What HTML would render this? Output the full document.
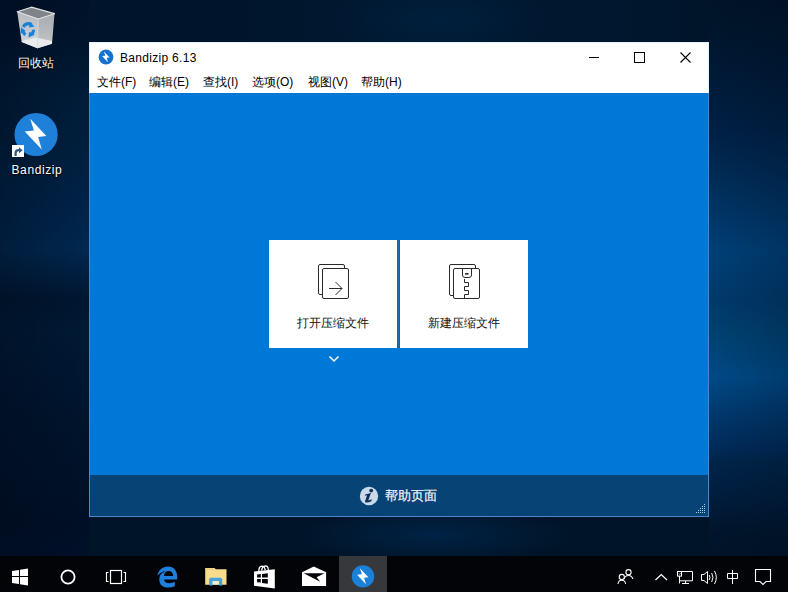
<!DOCTYPE html>
<html><head><meta charset="utf-8">
<style>
*{margin:0;padding:0;box-sizing:border-box}
html,body{width:788px;height:592px;overflow:hidden}
body{position:relative;font-family:"Liberation Sans",sans-serif;background:#001428}
.bg{position:absolute}
#bgL{left:0;top:0;width:89px;height:556px;
background:linear-gradient(90deg,rgba(0,8,22,0.35),rgba(0,8,22,0) 100%),
linear-gradient(180deg,#00122a 0%,#00132a 5%,#001c38 16%,#00203f 28%,#002248 36%,#002850 45%,#001630 54%,#001a35 59%,#001530 72%,#00142c 76%,#001128 88%,#000f25 94%,#00102a 100%)}
#bgT{left:89px;top:0;width:620px;height:42px;
background:radial-gradient(ellipse 110px 40px at 351px 20px,rgba(0,32,62,0.9),rgba(0,32,62,0) 100%),linear-gradient(90deg,#00142b 0%,#00152c 20%,#001830 50%,#00172f 83%,#00152a 100%)}
#bgB{left:89px;top:517px;width:620px;height:39px;
background:radial-gradient(ellipse 140px 30px at 345px 18px,rgba(0,36,72,0.9),rgba(0,36,72,0) 100%),#001428}
#bgR{left:709px;top:0;width:79px;height:556px;
background:linear-gradient(90deg,rgba(0,10,25,0) 0%,rgba(0,10,25,0.22) 100%),
linear-gradient(180deg,#00132a 0%,#00152a 4%,#001a38 14%,#002045 23%,#002850 29%,#003566 38%,#004078 45%,#003a6c 54%,#004272 60%,#004a88 68%,#003a70 74%,#002a58 81%,#00254a 83%,#001c3c 90%,#00152b 96%,#00132a 100%)}
.a{position:absolute;white-space:nowrap}
svg{position:absolute;overflow:visible}
#win{position:absolute;left:89px;top:42px;width:620px;height:475px;border:1px solid #4a86cc;background:#0078d7}
#title{position:absolute;left:-1px;top:-1px;width:620px;height:31px;background:#fff;border:1px solid #e2f1fb;border-bottom:0}
#menu{position:absolute;left:-1px;top:30px;width:620px;height:20px;background:#fff;border:1px solid #e2f1fb;border-top:0;border-bottom:0}
#footer{position:absolute;left:0;top:432px;width:618px;height:41px;background:#074475}
.tile{position:absolute;top:197px;width:128px;height:108px;background:#fff}
#taskbar{position:absolute;left:0;top:556px;width:788px;height:36px;background:#030408}
.mi{position:absolute;top:2px;font-size:12px;line-height:14px;color:#000}
.lbl{font-size:12px;line-height:14px;color:#fff;text-shadow:0 1px 2px #000,0 0 1px #000}
</style></head><body>
<div class="bg" id="bgL"></div><div class="bg" id="bgT"></div><div class="bg" id="bgB"></div><div class="bg" id="bgR"></div>

<!-- desktop icons -->
<svg style="left:0;top:0" width="80" height="180" viewBox="0 0 80 180">
  <defs>
    <linearGradient id="rb" x1="0" y1="0" x2="0" y2="1">
      <stop offset="0" stop-color="#b4b8bd"/><stop offset="0.55" stop-color="#c4c7cb"/><stop offset="1" stop-color="#d6d9dc"/>
    </linearGradient>
  </defs>
  <path d="M17.2 11.7 L31.4 7.2 L54.5 13.7 L52 43.7 L37.5 48.2 L21.7 42.1 Z" fill="url(#rb)"/>
  <path d="M38.3 19 L54.5 13.7 L52 43.7 L37.5 48.2 Z" fill="#000" opacity="0.08"/>
  <path d="M21.7 41 L36 37.5 L52 41 L52 43.7 L37.5 48.2 L21.7 42.1 Z" fill="#eceef0" opacity="0.9"/>
  <path d="M17.2 11.7 L31.4 7.2 L54.5 13.7 L38.3 19 Z" fill="#7f8489" stroke="#dfe2e5" stroke-width="1.2" stroke-linejoin="round"/>
  <path d="M38.3 19 L37.5 48.2" stroke="#d5d8dc" stroke-width="0.8"/>
  <g fill="none" stroke="#1a80d8" stroke-width="3.2">
    <path d="M23.2 27 A5.6 5.6 0 0 1 31.5 24.6"/>
    <path d="M33.6 29.8 A5.6 5.6 0 0 1 29.5 35"/>
    <path d="M25.6 34.6 A5.6 5.6 0 0 1 22.6 29.6"/>
  </g>
  <g fill="#1a80d8">
    <path d="M30 22 L34.5 26.6 L29 27.6 Z"/>
    <path d="M34.8 34.5 L28.5 37.5 L29 32 Z"/>
    <path d="M20.5 33.5 L21 27.2 L25.5 31 Z"/>
  </g>
  <circle cx="36.1" cy="134.5" r="21.6" fill="#1e80d8"/>
  <path d="M30.22 118.74 L46.35 136.09 L38.13 137.00 L41.78 149.48 L24.74 131.52 L33.87 130.61 Z" fill="#fff"/>
  <rect x="12" y="145" width="12" height="12" fill="#fff"/>
  <path d="M15.6 156 V153 Q15.6 150.2 18.6 150.2 H19.5" fill="none" stroke="#30557e" stroke-width="2.2"/>
  <path d="M19 147.2 L22.6 150.2 L19 153.2 Z" fill="#30557e"/>
</svg>
<div class="a lbl" style="left:18px;top:56px;">回收站</div>
<div class="a lbl" style="left:11.5px;top:163px;letter-spacing:0.6px">Bandizip</div>

<div id="win">
  <div id="title">
    <svg style="left:8px;top:6px" width="16" height="16" viewBox="0 0 16 16">
      <circle cx="8" cy="8" r="7.4" fill="#1473d0"/>
      <path d="M5.98 2.58 L11.53 8.55 L8.70 8.86 L9.96 13.16 L4.09 6.97 L7.23 6.66 Z" fill="#fff"/>
    </svg>
    <div class="a" style="left:30px;top:8px;font-size:12px;line-height:14px;color:#000;letter-spacing:0.3px">Bandizip 6.13</div>
    <svg style="left:499px;top:14px" width="12" height="2"><rect x="0" y="0" width="10" height="1" fill="#000"/></svg>
    <svg style="left:544px;top:9px" width="12" height="12"><rect x="0.5" y="0.5" width="10" height="10" fill="none" stroke="#000" stroke-width="1"/></svg>
    <svg style="left:590px;top:9px" width="12" height="12"><path d="M0.5 0.5 L10.5 10.5 M10.5 0.5 L0.5 10.5" stroke="#000" stroke-width="1.1"/></svg>
  </div>
  <div id="menu">
    <div class="mi" style="left:7px">文件(F)</div>
    <div class="mi" style="left:59px">编辑(E)</div>
    <div class="mi" style="left:113px">查找(I)</div>
    <div class="mi" style="left:162px">选项(O)</div>
    <div class="mi" style="left:218px">视图(V)</div>
    <div class="mi" style="left:271px">帮助(H)</div>
  </div>

  <div class="tile" style="left:179px">
    <svg style="left:0;top:0" width="128" height="108" viewBox="269 240 128 108">
      <rect x="318.5" y="264.5" width="26" height="30" rx="1.5" fill="#fff" stroke="#2a2a2a" stroke-width="1"/>
      <rect x="322.5" y="268.5" width="26" height="30" rx="1.5" fill="#fff" stroke="#2a2a2a" stroke-width="1"/>
      <path d="M329 288.5 H342 M335.5 282 L342 288.5 L335.5 295" fill="none" stroke="#2a2a2a" stroke-width="1"/>
    </svg>
    <div class="a" style="left:0;width:128px;top:76px;text-align:center;font-size:12px;line-height:14px;color:#111">打开压缩文件</div>
  </div>
  <div class="a" style="left:307px;top:197px;width:3px;height:108px;background:linear-gradient(90deg,#0e5a94,#1d70b2,#0e5a94)"></div>
  <div class="tile" style="left:310px">
    <svg style="left:0;top:0" width="128" height="108" viewBox="400 240 128 108">
      <rect x="449.5" y="264.5" width="26" height="31" rx="1.5" fill="#fff" stroke="#2a2a2a" stroke-width="1"/>
      <rect x="453.5" y="268.5" width="26" height="30" rx="1.5" fill="#fff" stroke="#2a2a2a" stroke-width="1"/>
      <path d="M462.5 268.5 V275 Q462.5 277.5 465 277.5 H469 Q471.5 277.5 471.5 275 V268.5" fill="none" stroke="#2a2a2a" stroke-width="1"/>
      <rect x="465" y="273" width="3.5" height="1.6" fill="#2a2a2a"/>
      <path d="M464.5 279 V282.5 H468.5 V286.5 H464.5 V290.5 H468.5 V294.5 H464.5 V298.5" fill="none" stroke="#2a2a2a" stroke-width="1"/>
    </svg>
    <div class="a" style="left:0;width:128px;top:76px;text-align:center;font-size:12px;line-height:14px;color:#111">新建压缩文件</div>
  </div>
  <svg style="left:237.5px;top:312px" width="12" height="8" viewBox="0 0 12 8">
    <path d="M1.5 1.5 L6 6 L10.5 1.5" fill="none" stroke="#fff" stroke-width="1.5"/>
  </svg>

  <div id="footer">
    <svg style="left:270px;top:11px" width="20" height="20" viewBox="0 0 20 20">
      <circle cx="9" cy="10" r="9.2" fill="#c9d9ea"/>
      <circle cx="11.2" cy="4.6" r="1.9" fill="#0f2f55"/>
      <path d="M5.2 8.6 L11 7 L8.4 14 Q8.3 14.6 9 14.3 L11.9 13.2 L11.3 15.2 Q8.6 16.8 6.4 16.6 Q4.6 16.4 5 15.2 L7.1 9.3 L5 9.7 Z" fill="#0f2f55"/>
</svg>
    <div class="a" style="left:295px;top:13px;font-size:13px;line-height:15px;color:#f0f4f8;-webkit-text-stroke:0.2px #f0f4f8">帮助页面</div>
    <svg style="left:606px;top:29px" width="10" height="10" viewBox="696 504 10 10">
      <g fill="#a6cdf0">
        <rect x="704" y="504" width="1" height="1"/>
        <rect x="702" y="506" width="1" height="1"/><rect x="704" y="506" width="1" height="1"/>
        <rect x="700" y="508" width="1" height="1"/><rect x="702" y="508" width="1" height="1"/><rect x="704" y="508" width="1" height="1"/>
        <rect x="698" y="510" width="1" height="1"/><rect x="700" y="510" width="1" height="1"/><rect x="702" y="510" width="1" height="1"/><rect x="704" y="510" width="1" height="1"/>
        <rect x="696" y="512" width="1" height="1"/><rect x="698" y="512" width="1" height="1"/><rect x="700" y="512" width="1" height="1"/><rect x="702" y="512" width="1" height="1"/><rect x="704" y="512" width="1" height="1"/>
      </g>
    </svg>
  </div>
</div>

<div id="taskbar">
  <svg style="left:0;top:0" width="788" height="36" viewBox="0 556 788 36">
    <!-- start -->
    <path d="M12 570.9 L19 569.9 V576 H12 Z M20 569.7 L28 568.5 V576 H20 Z M12 577 H19 V584.1 L12 583.1 Z M20 577 H28 V585.5 L20 584.3 Z" fill="#fff"/>
    <!-- cortana -->
    <circle cx="68" cy="577" r="6.6" fill="none" stroke="#fff" stroke-width="1.8"/>
    <!-- task view -->
    <rect x="110.5" y="570.5" width="11" height="13" fill="none" stroke="#fff" stroke-width="1.2"/>
    <path d="M108.5 572.5 H106.5 V581.5 H108.5 M123.5 572.5 H125.5 V581.5 H123.5" fill="none" stroke="#fff" stroke-width="1.1"/>
    <!-- edge -->
    <path fill-rule="evenodd" d="M157.3 575.8 C158.5 570 162.5 566.5 168 566.5 C173.5 566.5 177.2 570.5 177.2 576.5 L177.2 579.4 L163.9 579.4 C164.3 581.8 166.2 583.2 169.3 583.2 C171.3 583.2 173.2 582.7 174.8 581.8 L174.8 586.3 C172.8 587.2 170.5 587.6 168 587.6 C162.5 587.6 159.3 584.5 159.3 579.5 C159.3 576.5 160.5 574 162.5 572.5 C160.5 573.2 158.5 574.3 157.3 575.8 Z M163.9 575.9 L173.2 575.9 C173.0 572.8 171.2 571 168.6 571 C166 571 164.3 572.8 163.9 575.9 Z" fill="#1f7fdc"/>
    <path d="M159.6 574.6 Q161.6 572.4 164.6 571.4" fill="none" stroke="#030408" stroke-width="0.9"/>
    <!-- explorer -->
    <path d="M205.2 567.9 H214.5 L215.8 569.2 H226.5 V584.8 H205.2 Z" fill="#f6dc8c"/>
    <path d="M205.5 568.2 H213.5 L214.5 570 H205.5 Z" fill="#eed17a"/>
    <path d="M209.2 585.6 V579.4 Q209.2 577.8 210.8 577.8 H220.6 Q222.2 577.8 222.2 579.4 V585.6 H218.9 V581 H212.6 V585.6 Z" fill="#45a4dc"/>
    <rect x="212.6" y="581" width="6.3" height="3.6" fill="#e6f0d8"/>
    <!-- store -->
    <path d="M254 571.6 L274.8 569.2 V588.4 L254 585.8 Z" fill="#fff"/>
    <path d="M258.8 571.2 Q258.8 566.3 262 566.2 Q264.6 566.2 265.2 570.2 M261.5 570.6 Q262.3 566 265.5 565.8 Q268.3 565.8 268.3 570" fill="none" stroke="#fff" stroke-width="1.3"/>
    <path d="M257.1 574.4 L260.8 574.1 V577.5 H257.1 Z M262 573.9 L267.8 573.3 V577.5 H262 Z M257.1 579 H260.8 V582.5 L257.1 582.2 Z M262 579 H267.8 V583.8 L262 583.1 Z" fill="#030408"/>
    <!-- mail -->
    <path d="M302 572.2 L313.8 566.6 L326.1 572.2 V585.9 H302 Z" fill="#fff"/>
    <path d="M303.6 573.2 H324.4 L316.6 577.3 L320.3 581.8 Z" fill="#030408"/>
    <!-- bandizip active -->
    <rect x="339" y="556" width="48" height="36" fill="#37383b"/>
    <circle cx="363" cy="576.4" r="11.2" fill="#1b80d8"/>
    <path d="M359.94 568.19 L368.34 577.23 L364.06 577.70 L365.96 584.20 L357.08 574.85 L361.84 574.37 Z" fill="#fff"/>
    <!-- tray: people -->
    <circle cx="628.5" cy="572.2" r="2.6" fill="none" stroke="#fff" stroke-width="1.1"/>
    <path d="M624 579 Q625 575.5 628.5 575.5 Q632 575.5 632.8 579" fill="none" stroke="#fff" stroke-width="1.1"/>
    <circle cx="621.8" cy="577" r="2.6" fill="#030408" stroke="#fff" stroke-width="1.1"/>
    <path d="M618 584 Q618.4 580.2 621.8 580.2 Q625.2 580.2 625.6 584" fill="none" stroke="#fff" stroke-width="1.1"/>
    <!-- chevron -->
    <path d="M655.5 580 L661.3 574.5 L667 580" fill="none" stroke="#fff" stroke-width="1.2"/>
    <!-- network -->
    <path d="M681.5 571.5 H692.5 V580.8 H680" fill="none" stroke="#fff" stroke-width="1"/>
    <rect x="677.5" y="571.5" width="4" height="4.6" fill="none" stroke="#fff" stroke-width="1"/>
    <path d="M678.8 573.6 L679.6 574.4 L680.6 573" fill="none" stroke="#fff" stroke-width="0.7"/>
    <path d="M679.5 576 V583.5 M685.5 581 V583.5 M682 583.5 H689" fill="none" stroke="#fff" stroke-width="1"/>
    <!-- volume -->
    <path d="M701.5 574.5 H704 L707.5 571.5 V583.5 L704 580.5 H701.5 Z" fill="none" stroke="#fff" stroke-width="1"/>
    <path d="M709.2 575 Q710.8 577.5 709.2 580 M711.7 573 Q714.2 577.5 711.7 582 M714.5 571 Q718.2 577.5 714.5 584" fill="none" stroke="#fff" stroke-width="1"/>
    <!-- ime -->
    <path d="M727.5 573.5 H737.5 V578.5 H727.5 Z M732.5 570 V584" fill="none" stroke="#fff" stroke-width="1"/>
    <!-- action center -->
    <path d="M755.5 569.5 H770.5 V581.5 H766 L763 584.5 L760 581.5 H755.5 Z" fill="none" stroke="#fff" stroke-width="1.1"/>
  </svg>
  
</div>
</body></html>
